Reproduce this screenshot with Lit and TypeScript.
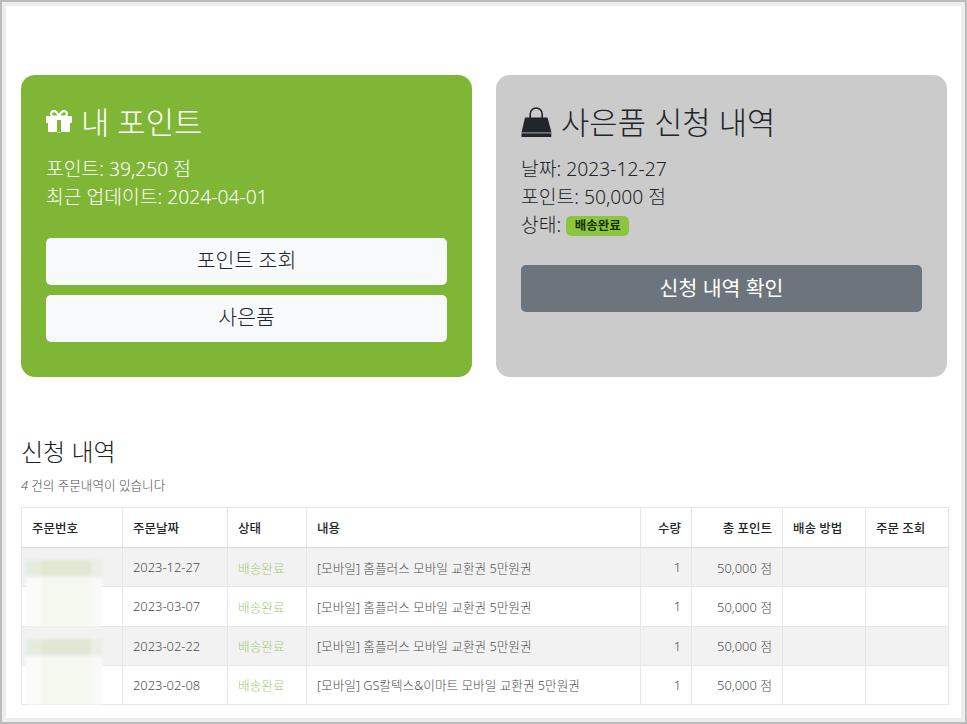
import { LitElement, html, css } from "lit";
import { customElement } from "lit/decorators.js";

const rows = [
  { d: "2023-12-27", c: "[모바일] 홈플러스 모바일 교환권 5만원권", b: "g" },
  { d: "2023-03-07", c: "[모바일] 홈플러스 모바일 교환권 5만원권", b: "w" },
  { d: "2023-02-22", c: "[모바일] 홈플러스 모바일 교환권 5만원권", b: "g" },
  { d: "2023-02-08", c: "[모바일] GS칼텍스&이마트 모바일 교환권 5만원권", b: "w" },
];

@customElement("app-root")
export class AppRoot extends LitElement {
  static styles = css`
    :host { display: block; width: 967px; height: 724px; box-sizing: border-box; overflow: hidden;
      font-family: "Noto Sans", "Noto Sans CJK KR", sans-serif; color: #212529; background: #ededed;
      border: 2px solid #bcbcbc; padding: 4px; }
    .page { background: #fff; height: 100%; box-sizing: border-box; padding: 69px 0 0 15px; }
    .cards { display: grid; grid-template-columns: 451px 451px; gap: 24px; }
    .card { height: 302px; box-sizing: border-box; border-radius: 14px; padding: 25px; }
    .green { background: #7fb636; color: #fff; }
    .gray { background: #cbcbcb; }
    h3 { margin: 1px 0 12px; height: 42px; font-size: 30.8px; line-height: 42px; font-weight: 300; display: flex; align-items: center; gap: 9px; }
    h3 svg { flex: none; display: block; }
    .lines { font-size: 19.3px; line-height: 28px; font-weight: 300; margin-bottom: 27px; }
    .lines div { height: 28px; white-space: nowrap; }
    .badge { display: inline-block; background: #8cc63f; color: #173300; font-size: 12.5px; font-weight: 700; line-height: 20px; height: 20px; width: 63px; text-align: center; border-radius: 5px; vertical-align: 2px; }
    .btn { display: block; height: 47px; line-height: 45px; text-align: center; border-radius: 5px; font-size: 20.5px; background: #f8f9fa; color: #212529; font-weight: 300; }
    .btn + .btn { margin-top: 10px; }
    .btn.dark { background: #6c757d; color: #fff; line-height: 47px; font-weight: 400; }
    .gray .lines { margin-bottom: 26px; }
    h4 { margin: 57px 0 0; font-size: 24px; line-height: 36px; font-weight: 300; color: #222; }
    .count { font-size: 12.6px; line-height: 18px; margin-top: 7px; color: #4d4d4d; font-weight: 300; }
    table { border-collapse: collapse; table-layout: fixed; width: 926.5px; margin-top: 12px; font-size: 12.65px; color: #4d4d4d; }
    th, td { border: 1px solid #e7e7e9; padding: 0 10px; white-space: nowrap; text-align: left; }
    th { height: 39px; color: #212529; font-weight: 500; font-size: 12.5px; border-bottom-color: #dcdcdf; }
    td { height: 38.25px; font-weight: 300; }
    td.n { font-size: 12.9px; }
    tr.odd td { background: #f2f2f2; }
    .r { text-align: right; }
    .st { color: #9ecb75; }
    .mask { position: relative; }
    .blur { position: absolute; left: 4px; width: 76px; filter: blur(1.5px); }
    .blur.g { top: 12px; height: 16px; background: linear-gradient(90deg, #e6ecdc 0 20%, #dfe8d2 20% 85%, #eaeee4 85% 100%); }
    .blur.w { top: -9px; height: 48px; background: linear-gradient(90deg, #fbfcf9 0 20%, #f5f8ef 20% 85%, #f9f9f7 85% 100%); }
  `;

  render() {
    return html`<div class="page">
      <div class="cards">
        <section class="card green">
          <h3>
            <svg width="26" height="24" viewBox="0 0 26 24" fill="#fff"><path fill-rule="evenodd" d="M8 0c2.4 0 4 1.8 5 4 1-2.2 2.6-4 5-4 2.3 0 4 1.6 4 3.6 0 1-.4 1.9-1 2.4h4c.6 0 1 .4 1 1v5c0 .5-.4 1-1 1h-1v8c0 .6-.4 1-1 1H3c-.6 0-1-.4-1-1v-8H1c-.6 0-1-.5-1-1V7c0-.6.4-1 1-1h4c-.6-.5-1-1.4-1-2.4C4 1.6 5.700 0 8 0zm0 2.200c-1 0-1.800.6-1.800 1.500S7 5.500 8 5.500h3.300C10.500 3.500 9.400 2.200 8 2.200zm10 0c-1.400 0-2.500 1.300-3.300 3.300H18c1 0 1.800-.9 1.800-1.800s-.8-1.500-1.800-1.500zM11 10v12.500h4V10z"/></svg>
            내 포인트
          </h3>
          <div class="lines"><div>포인트: 39,250 점</div><div>최근 업데이트: 2024-04-01</div></div>
          <a class="btn">포인트 조회</a>
          <a class="btn">사은품</a>
        </section>
        <section class="card gray">
          <h3>
            <svg width="31" height="31" viewBox="0 0 31 31" fill="none"><path d="M9.200 12V7a6 6 0 0 1 12 0V12" stroke="#212529" stroke-width="1.600"/><path d="M4 10.500h22.500l4 15H0.500z" fill="#212529"/><path d="M0.500 26.300h29.800v3.700H0.500z" fill="#212529"/></svg>
            사은품 신청 내역
          </h3>
          <div class="lines"><div>날짜: 2023-12-27</div><div>포인트: 50,000 점</div><div>상태: <span class="badge">배송완료</span></div></div>
          <a class="btn dark">신청 내역 확인</a>
        </section>
      </div>
      <h4>신청 내역</h4>
      <div class="count"><i>4</i> 건의 주문내역이 있습니다</div>
      <table>
        <colgroup><col style="width:101px"><col style="width:105px"><col style="width:79px"><col style="width:334px"><col style="width:51px"><col style="width:91px"><col style="width:83px"><col style="width:82.5px"></colgroup>
        <thead><tr><th>주문번호</th><th>주문날짜</th><th>상태</th><th>내용</th><th class="r">수량</th><th class="r">총 포인트</th><th>배송 방법</th><th>주문 조회</th></tr></thead>
        <tbody>
          ${rows.map((r, i) => html`<tr class=${i % 2 === 0 ? "odd" : ""}>
            <td class="mask"><div class="blur ${r.b}"></div></td><td class="n">${r.d}</td><td class="st">배송완료</td><td>${r.c}</td><td class="r n">1</td><td class="r n">50,000 점</td><td></td><td></td>
          </tr>`)}
        </tbody>
      </table>
    </div>`;
  }
}
